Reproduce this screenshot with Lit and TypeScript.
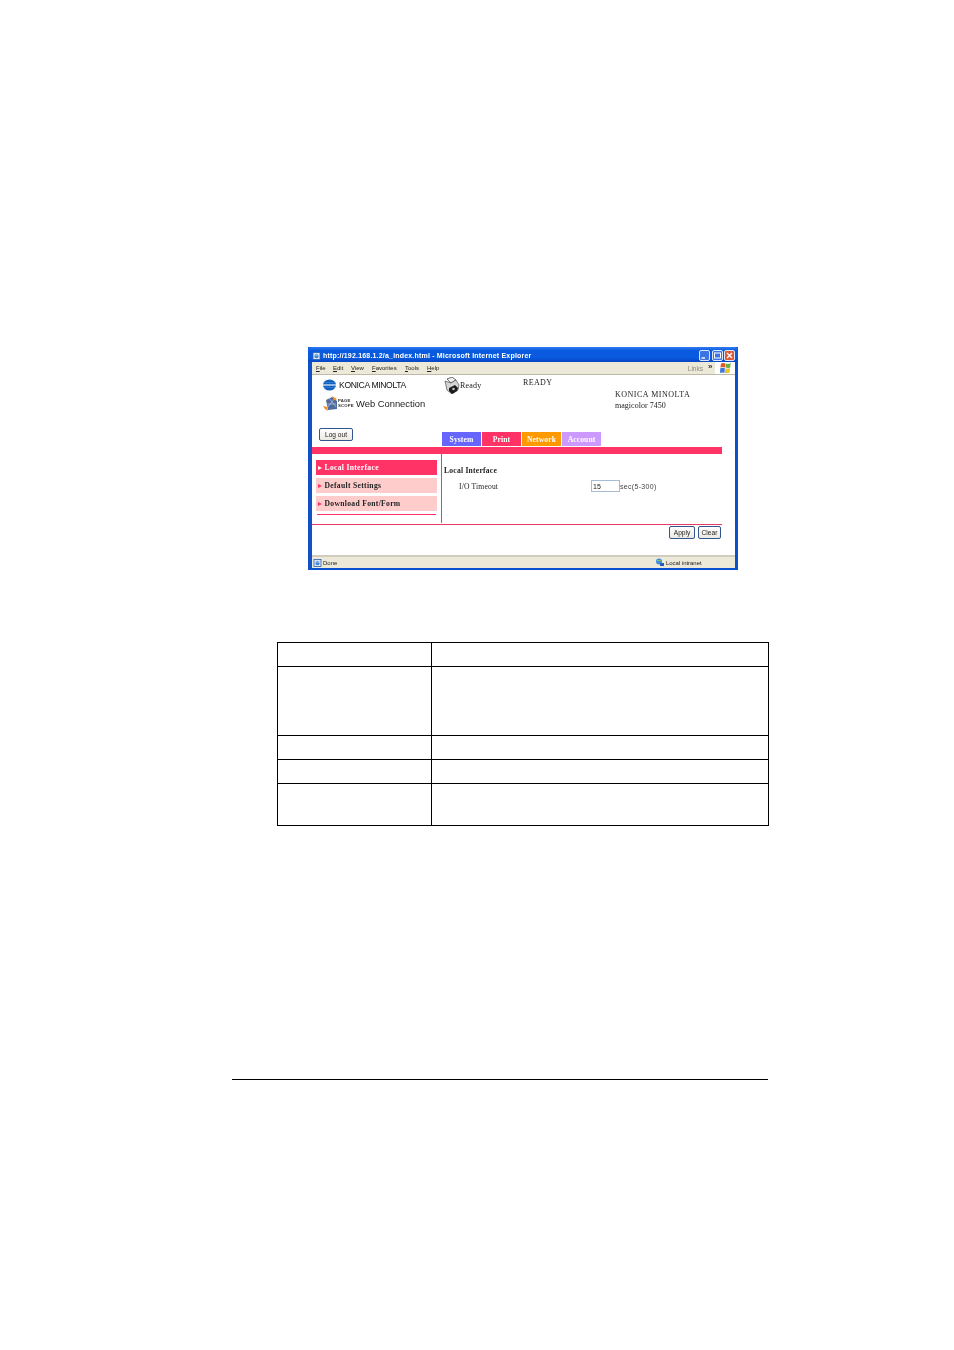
import { LitElement, html, css } from "lit";
import { customElement } from "lit/decorators.js";

const flag = html`<svg class="flag" viewBox="0 0 11 12" width="11" height="12">
  <path d="M1 1.5 Q3 .3 5.4 1.5 L5 5.6 Q3 4.6 .4 5.6Z" fill="#e2572c"/>
  <path d="M5.9 1.5 Q8 2.6 10.8 1 L10.2 5.4 Q8 6.4 5.5 5.6Z" fill="#6cb33e"/>
  <path d="M.3 6.2 Q3 5.2 4.9 6.2 L4.4 11 Q2 10 0 11Z" fill="#3b78d8"/>
  <path d="M5.4 6.2 Q8 7.2 10.1 6 L9.5 10.8 Q7 11.6 4.9 11Z" fill="#f2c230"/></svg>`;

const ieIcon = html`<svg viewBox="0 0 9 9" width="9" height="9">
  <rect x="1" y="1.5" width="7" height="7" fill="#dfe9f8" stroke="#2a5db0" stroke-width=".8"/>
  <circle cx="4.5" cy="5" r="2.2" fill="#3f86d8"/><path d="M2 4h5" stroke="#fff" stroke-width=".6"/></svg>`;

@customElement("app-root")
export class AppRoot extends LitElement {
  static styles = css`
    :host { display: block; height: 1350px; background: #fff; overflow: hidden; font-family: "Liberation Serif", serif; color: #111; }
    .page { display: flex; flex-direction: column; padding-top: 347px; }

    .window { box-sizing: border-box; width: 430px; height: 223px; margin-left: 308px; display: flex; flex-direction: column;
      border: solid #0a4fd0; border-width: 0 3px 2px 4px; border-left-color: #1250c8; background: #fff; filter: blur(.35px); }

    .titlebar { height: 15px; margin: 0 -3px 0 -4px; padding: 1px 3px 0 4px; display: flex; align-items: center; gap: 2px; box-sizing: border-box;
      background: linear-gradient(#2f7cf0 0, #0a5ae0 25%, #0a5ae0 70%, #0846c4 100%); border-radius: 3px 3px 0 0; }
    .title { flex: 1; color: #fff; font: bold 7px "Liberation Sans", sans-serif; letter-spacing: .19px; white-space: nowrap; }
    .winbtn { width: 11px; height: 11px; box-sizing: border-box; border: 1px solid #dce6fa; border-radius: 2px; background: #3c74e6; display: flex; align-items: center; justify-content: center; margin-left: -.5px; }
    .winbtn.close { background: #dc5a36; }
    .winbtn svg { display: block; }

    .menubar { height: 13px; display: flex; align-items: center; background: #ece9d8; border-bottom: 1px solid #bdbaa8; box-sizing: border-box; font: 6px "Liberation Sans", sans-serif; color: #222; }
    .menus { display: flex; flex: 1; padding-left: 4px; }
    .menus span { display: inline-block; }
    .menus span::first-letter { text-decoration: underline; text-decoration-thickness: .4px; }
    .links { color: #8a8a80; font-size: 6.5px; margin-right: 5px; }
    .chev { font: bold 8px "Liberation Sans", sans-serif; color: #333; margin: -4px 2px 0 0; width: 5px; }
    .flagbox { width: 20px; height: 12px; background: #fff; display: flex; align-items: center; justify-content: center; }

    .content { flex: 1; display: flex; flex-direction: column; min-height: 0; }
    .head { height: 72px; display: flex; }
    .brand { width: 130px; box-sizing: border-box; padding: 4px 0 0 11px; display: flex; flex-direction: column; }
    .konica { display: flex; align-items: center; gap: 3px; height: 12px; font: 8.6px "Liberation Sans", sans-serif; letter-spacing: -.35px; color: #111; white-space: nowrap; }
    .pagescope { display: flex; align-items: center; height: 15px; margin-top: 5px; white-space: nowrap; }
    .ps-mark { width: 15px; display: flex; }
    .ps-text { font: bold 4.3px/4.6px "Liberation Sans", sans-serif; letter-spacing: .15px; width: 18px; color: #333; }
    .wc { font: 9.4px "Liberation Sans", sans-serif; color: #222; letter-spacing: 0; }
    .logout { margin: 17px 0 0 -4px; }
    .btn { box-sizing: border-box; height: 13px; display: inline-flex; align-items: center; justify-content: center; background: linear-gradient(#fff, #ece9e0); border: 1px solid #31558c; border-radius: 2px; font: 6.6px "Liberation Sans", sans-serif; color: #222; padding: 0; }
    .logout.btn { width: 34px; }

    .right { flex: 1; display: flex; flex-direction: column; margin-right: 13px; }
    .info { height: 57px; display: flex; font-size: 8px; color: #222; }
    .ready-cell { width: 81px; box-sizing: border-box; padding: 2px 0 0 2px; display: flex; gap: 0; align-items: flex-start; }
    .ready-cell span { margin-top: 4px; letter-spacing: .22px; }
    .state { width: 92px; padding-top: 3px; letter-spacing: .35px; }
    .model { padding-top: 15px; line-height: 10.5px; letter-spacing: .2px; white-space: nowrap; }
    .model b { font-weight: normal; letter-spacing: .5px; }
    .model i { font-style: normal; letter-spacing: .02px; }
    .tabs { display: flex; gap: 1px; height: 14px; }
    .tab { width: 39px; display: flex; align-items: center; justify-content: center; color: #fff; font: bold 7.6px "Liberation Serif", serif; letter-spacing: .1px; }
    .system { background: #6666ff; } .print { background: #ff3366; } .network { background: #ff9900; } .account { background: #cc99ff; }

    .bar { height: 7px; margin-right: 13px; background: #ff3366; }
    .main { display: flex; height: 69px; margin-right: 13px; }
    .side { width: 130px; box-sizing: border-box; padding: 6px 4px 0 4px; border-right: 1px solid #ff3366; display: flex; flex-direction: column; gap: 3px; }
    .item { height: 15px; display: flex; align-items: center; background: #ffcccc; font: bold 7.6px "Liberation Serif", serif; letter-spacing: .32px; color: #222; padding-left: 2px; white-space: nowrap; }
    .item.on { background: #ff3366; color: #fff; }
    .tri { width: 0; height: 0; border-left: 4px solid #ff3366; border-top: 2.5px solid transparent; border-bottom: 2.5px solid transparent; margin-right: 2.5px; }
    .on .tri { border-left-color: #fff; }
    .side hr { margin: 0 1px 0; border: 0; height: 1px; background: #ff3366; }
    .form { flex: 1; padding: 12px 0 0 2px; font-size: 7.6px; color: #222; }
    .form-title { font-weight: bold; letter-spacing: .23px; line-height: 9px; }
    .form-row { display: flex; align-items: center; height: 12px; margin-top: 5px; padding-left: 15px; letter-spacing: .16px; }
    .lbl { width: 132px; }
    .input { box-sizing: border-box; width: 29px; height: 12px; border: 1px solid #a5bcd2; font: 7px "Liberation Sans", sans-serif; padding-left: 1px; display: flex; align-items: center; }
    .unit { font: 7px "Liberation Sans", sans-serif; color: #444; letter-spacing: .32px; white-space: nowrap; }

    .line2 { height: 1px; margin: 1px 13px 0 0; background: #e8386a; }
    .actions { display: flex; justify-content: flex-end; gap: 3px; margin: 1px 14px 0 0; }
    .apply { width: 26px; } .clear { width: 23px; }

    .status { height: 13px; display: flex; align-items: center; background: #ece9d8; border-top: 2px solid #d0cdbc; box-sizing: border-box; font: 6px "Liberation Sans", sans-serif; color: #222; padding-left: 1px; }
    .done { flex: 1; display: flex; align-items: center; gap: 1px; }
    .zone { width: 80px; display: flex; align-items: center; gap: 1px; letter-spacing: -.03px; }

    .table { box-sizing: border-box; width: 492px; margin: 72px 0 0 277px; border: solid #000; border-width: 1px 1px 0 1px; }
    .row { display: grid; grid-template-columns: 154px 1fr; border-bottom: 1px solid #000; box-sizing: border-box; }
    .row div:first-child { border-right: 1px solid #000; }
    .h24 { height: 24px; } .h69 { height: 69px; } .h42 { height: 42px; }
    .rule { width: 536px; height: 1px; margin: 253px 0 0 232px; background: #000; }
  `;

  render() {
    return html`<div class="page">
      <div class="window">
        <div class="titlebar">
          ${ieIcon}
          <div class="title">http://192.168.1.2/a_index.html - Microsoft Internet Explorer</div>
          <div class="winbtn"><svg viewBox="0 0 9 9" width="9" height="9"><path d="M1.5 7h3.5" stroke="#fff" stroke-width="1.4"/></svg></div>
          <div class="winbtn"><svg viewBox="0 0 9 9" width="9" height="9"><rect x="1.5" y="2" width="6" height="5" fill="none" stroke="#fff" stroke-width="1"/></svg></div>
          <div class="winbtn close"><svg viewBox="0 0 9 9" width="9" height="9"><path d="M2 2l5 5M7 2l-5 5" stroke="#fff" stroke-width="1.3"/></svg></div>
        </div>
        <div class="menubar">
          <div class="menus">
            <span style="width:17px">File</span><span style="width:18px">Edit</span><span style="width:21px">View</span><span style="width:33px">Favorites</span><span style="width:22px">Tools</span><span>Help</span>
          </div>
          <span class="links">Links</span><span class="chev">»</span>
          <div class="flagbox">${flag}</div>
        </div>
        <div class="content">
          <div class="head">
            <div class="brand">
              <div class="konica">
                <svg viewBox="0 0 13 12" width="13" height="12"><ellipse cx="6.5" cy="6" rx="6.5" ry="5.6" fill="#0f62c0"/><path d="M0 6h13" stroke="#fff" stroke-width="1.1"/><path d="M1 3.6h11M1 8.4h11" stroke="#5d9be0" stroke-width=".4"/></svg>
                <span>KONICA MINOLTA</span>
              </div>
              <div class="pagescope">
                <span class="ps-mark"><svg viewBox="0 0 15 15" width="15" height="15">
                  <path d="M3 4l6-3 5 4v8l-9 1z" fill="#4f6a9c"/><path d="M6 2l7 9M11 3l-7 9M3 8h10" stroke="#b9c6de" stroke-width=".7"/>
                  <path d="M9 0l5 3-3 1.5zM0 10l4 1 1 4-3-2z" fill="#f08a24"/></svg></span>
                <span class="ps-text">PAGE<br />SCOPE</span>
                <span class="wc">Web Connection</span>
              </div>
              <div class="btn logout">Log out</div>
            </div>
            <div class="right">
              <div class="info">
                <div class="ready-cell">
                  <svg viewBox="0 0 16 17" width="16" height="17">
                    <path d="M3 2l5-2 4 3-5 3z" fill="#eee" stroke="#333" stroke-width=".7"/>
                    <path d="M1 4l6 2 5-3 3 5-1 5-6 4-5-4z" fill="#d5d5d5" stroke="#333" stroke-width=".6"/>
                    <path d="M5 11l6-3 3 3-1 3-5 3-3-3z" fill="#1c1c1c"/>
                    <circle cx="9.5" cy="12" r="1.3" fill="#bbb"/>
                  </svg>
                  <span>Ready</span>
                </div>
                <div class="state">READY</div>
                <div class="model"><b>KONICA MINOLTA</b><br /><i>magicolor 7450</i></div>
              </div>
              <div class="tabs">
                <div class="tab system">System</div><div class="tab print">Print</div><div class="tab network">Network</div><div class="tab account">Account</div>
              </div>
            </div>
          </div>
          <div class="bar"></div>
          <div class="main">
            <div class="side">
              <div class="item on"><i class="tri"></i>Local Interface</div>
              <div class="item"><i class="tri"></i>Default Settings</div>
              <div class="item"><i class="tri"></i>Download Font/Form</div>
              <hr />
            </div>
            <div class="form">
              <div class="form-title">Local Interface</div>
              <div class="form-row"><span class="lbl">I/O Timeout</span><span class="input">15</span><span class="unit">sec(5-300)</span></div>
            </div>
          </div>
          <div class="line2"></div>
          <div class="actions"><div class="btn apply">Apply</div><div class="btn clear">Clear</div></div>
        </div>
        <div class="status">
          <div class="done">${ieIcon}<span>Done</span></div>
          <div class="zone">
            <svg viewBox="0 0 10 9" width="10" height="9"><circle cx="4" cy="3.5" r="3" fill="#3f8fd8"/><path d="M2 2.5h4" stroke="#7fc060"/><rect x="5" y="5" width="4" height="3" fill="#2a5db0"/></svg>
            <span>Local intranet</span>
          </div>
        </div>
      </div>

      <div class="table">
        <div class="row h24"><div></div><div></div></div>
        <div class="row h69"><div></div><div></div></div>
        <div class="row h24"><div></div><div></div></div>
        <div class="row h24"><div></div><div></div></div>
        <div class="row h42"><div></div><div></div></div>
      </div>
      <div class="rule"></div>
    </div>`;
  }
}
